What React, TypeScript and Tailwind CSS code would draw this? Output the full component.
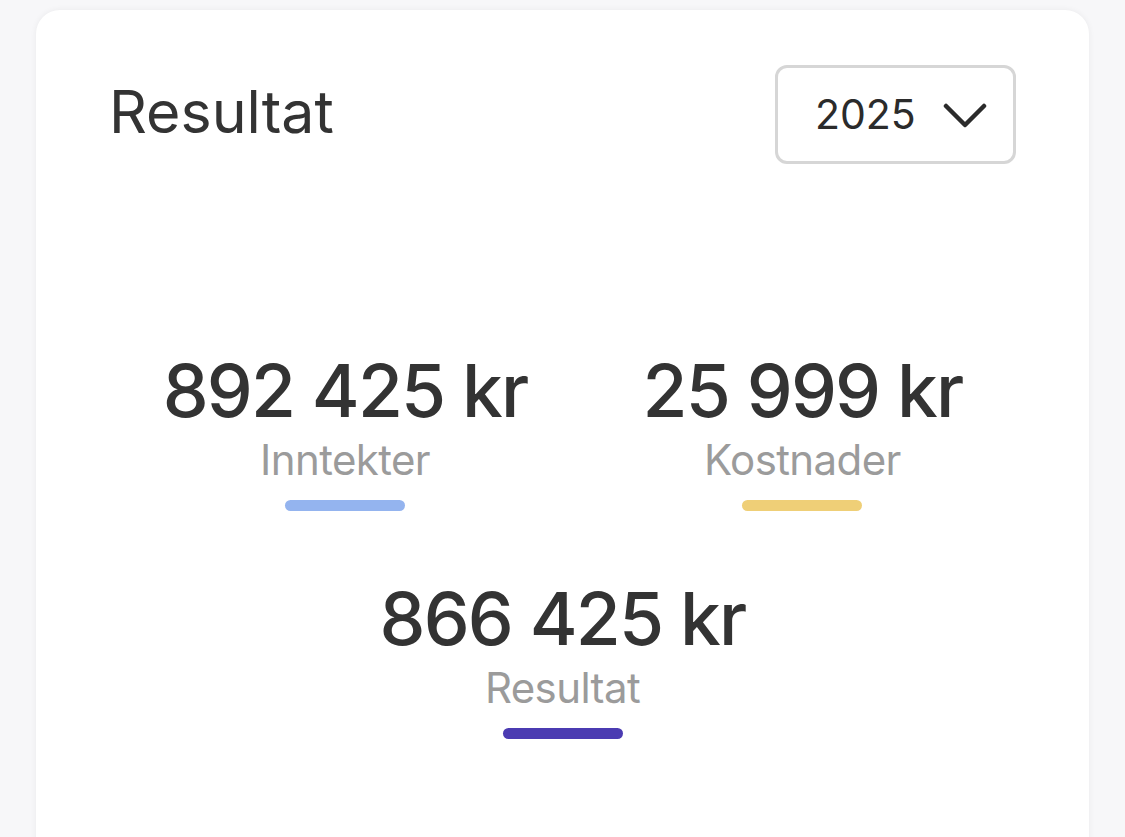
const stats = [
  { value: '892 425 kr', label: 'Inntekter', color: 'bg-[#94b4ef]' },
  { value: '25 999 kr', label: 'Kostnader', color: 'bg-[#efcf77]' },
];

function Stat({ value, label, color }: { value: string; label: string; color: string }) {
  return (
    <div className="flex flex-col items-center">
      <p className="text-[73px] leading-none font-medium text-[#333333] tracking-[-1.8px]">{value}</p>
      <p className="mt-[12px] text-[42px] leading-none text-[#9b9b9b] tracking-[-0.6px]">{label}</p>
      <div className={`mt-[19px] h-[11px] w-[120px] rounded-full ${color}`} />
    </div>
  );
}

export default function App() {
  return (
    <div className="min-h-screen bg-[#f7f7f9] px-[36px] pt-[10px] font-['Inter',sans-serif] h-[837px] overflow-hidden">
      <div className="bg-white rounded-[24px] shadow-[0_0_6px_rgba(0,0,0,0.06)] h-[900px] px-[73px] pt-[55px]">
        {/* Header */}
        <div className="flex items-center justify-between">
          <h2 className="text-[59px] leading-none text-[#333333] font-normal -mt-[6px]">Resultat</h2>
          <button className="flex items-center gap-[27px] w-[241px] h-[99px] border-[3px] border-[#d6d6d6] rounded-[12px] pl-[37px]">
            <span className="text-[41px] leading-none text-[#2b2b2b]">2025</span>
            <svg width="44" height="28" viewBox="0 0 44 28" fill="none" stroke="#2b2b2b" strokeWidth="4.5" strokeLinecap="round" strokeLinejoin="round">
              <path d="M3 5l19 19 19-19" />
            </svg>
          </button>
        </div>

        {/* Stats */}
        <div className="mt-[190px] flex justify-center gap-[115px]">
          {stats.map((s) => (
            <Stat key={s.label} {...s} />
          ))}
        </div>
        <div className="mt-[71px] flex justify-center">
          <Stat value="866 425 kr" label="Resultat" color="bg-[#4b3bb2]" />
        </div>
      </div>
    </div>
  );
}
